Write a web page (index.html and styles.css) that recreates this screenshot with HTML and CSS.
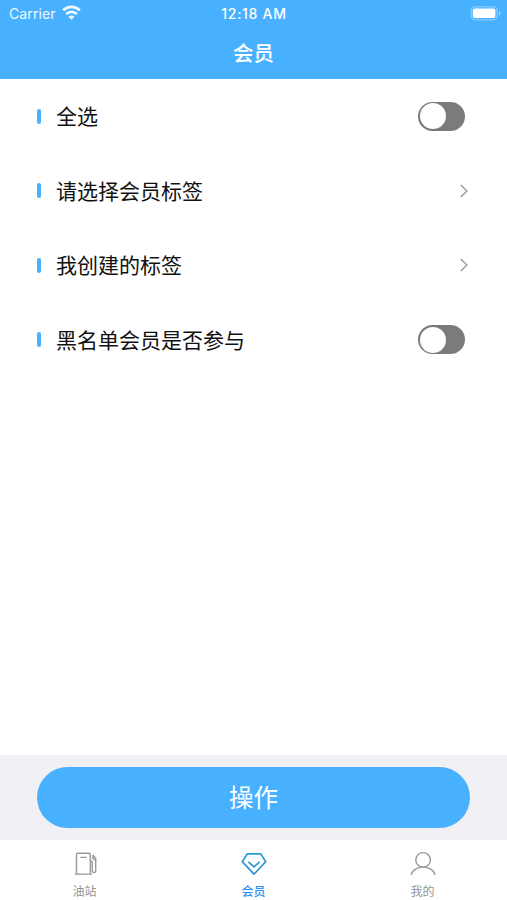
FILE: index.html
```html
<!DOCTYPE html>
<html lang="zh-CN">
<head>
<meta charset="utf-8">
<title>会员</title>
<link rel="stylesheet" href="styles.css">
</head>
<body>
<div class="screen">
  <header class="header">
    <div class="status">
      <div class="carrier">
        <span>Carrier</span>
        <svg class="wifi" width="19" height="15" viewBox="0 0 19 15" fill="none" stroke="#fff" stroke-width="2.8">
          <path d="M1.2 5.3a11.8 11.8 0 0 1 16.6 0"/>
          <path d="M4.2 9a7.6 7.6 0 0 1 10.6 0"/>
          <path d="M9.5 14.8 6.4 11.7a4.4 4.4 0 0 1 6.2 0z" fill="#fff" stroke="none"/>
        </svg>
      </div>
      <div class="time">12:18 AM</div>
      <svg class="battery" width="32" height="15" viewBox="0 0 32 15">
        <rect x="1.2" y=".8" width="26" height="13" rx="4" fill="none" stroke="#fff" stroke-opacity=".35" stroke-width="1.3"/>
        <rect x="2.8" y="2.5" width="22.6" height="9.6" rx="2.2" fill="#fff"/>
        <path d="M29 5.2c2.2.7 2.2 3.5 0 4.2z" fill="#fff" fill-opacity=".45"/>
      </svg>
    </div>
    <h1 class="title">会员</h1>
  </header>
  <main class="list">
    <div class="row"><span class="mark"></span><span class="label">全选</span><span class="switch"></span></div>
    <div class="row"><span class="mark"></span><span class="label">请选择会员标签</span>
      <svg class="chevron" width="8" height="14" viewBox="0 0 8 14"><path d="M.8 1 7 7 .8 13"/></svg></div>
    <div class="row"><span class="mark"></span><span class="label">我创建的标签</span>
      <svg class="chevron" width="8" height="14" viewBox="0 0 8 14"><path d="M.8 1 7 7 .8 13"/></svg></div>
    <div class="row"><span class="mark"></span><span class="label">黑名单会员是否参与</span><span class="switch"></span></div>
  </main>
  <div class="actions"><button class="action">操作</button></div>
  <nav class="tabs">
    <div class="tab">
      <svg width="28" height="28" viewBox="0 0 28 28">
        <path d="M5.5 24V4.4q0-1.2 1.2-1.2h11.4q1.2 0 1.2 1.2V24M4 24.1h17M9.4 7.4h6.2"/>
        <path d="M19.3 11.2h.9q1.1 0 1.1 1.1v8.6q0 1.6 1.7 1.6t1.7-1.6V8.2L21.6 5M22 5.5v3.4l2.7 1.5"/>
      </svg>
      <span>油站</span>
    </div>
    <div class="tab active">
      <svg width="28" height="28" viewBox="0 0 28 28">
        <path d="M7.4 3.8h13.2l5.2 7.9L14 24.2 2.2 11.7z"/>
        <path d="m8.4 11.8 5.6 5.1 5.6-5.1"/>
      </svg>
      <span>会员</span>
    </div>
    <div class="tab">
      <svg width="28" height="28" viewBox="0 0 28 28">
        <circle cx="14.1" cy="9.9" r="7.3"/>
        <path d="M2.3 24.8C4 14.6 24.2 14.6 25.9 24.8"/>
      </svg>
      <span>我的</span>
    </div>
  </nav>
</div>
</body>
</html>
```
FILE: styles.css
```css
* { box-sizing: border-box; }
body {
  margin: 0;
  background: #fff;
  color: #111;
  font-family: "Noto Sans CJK SC", sans-serif;
}
.screen {
  display: flex;
  flex-direction: column;
  width: 507px;
  height: 900px;
}
.header {
  height: 79px;
  background: #48b1ff;
  color: #fff;
}
.status {
  display: grid;
  grid-template-columns: 1fr auto 1fr;
  align-items: center;
  height: 27px;
  padding: 0 5px 0 9px;
  font: 14px/27px Inter, sans-serif;
}
.carrier {
  display: flex;
  align-items: center;
  gap: 6px;
  opacity: .92;
  letter-spacing: .1px;
}
.wifi { margin-top: -2px; }
.time {
  margin-left: -3px;
  font-weight: 500;
  letter-spacing: .7px;
}
.battery { justify-self: end; }
.title {
  margin: 0;
  font-size: 20.5px;
  font-weight: 500;
  line-height: 51px;
  text-align: center;
}
.list { flex: 1; }
.row {
  display: flex;
  align-items: center;
  height: 74.5px;
  padding: 0 42px 0 37px;
}
.mark {
  width: 4px;
  height: 15px;
  margin-right: 15px;
  border-radius: 2px;
  background: #48b1ff;
}
.label {
  flex: 1;
  padding-bottom: 2px;
  font-size: 21px;
  line-height: 30px;
}
.switch {
  width: 47px;
  height: 29px;
  padding: 1.5px;
  border-radius: 15px;
  background: #7b7b7b;
}
.switch::before {
  content: "";
  display: block;
  width: 26px;
  height: 26px;
  border-radius: 50%;
  background: #fff;
}
.chevron {
  margin-right: -3px;
  fill: none;
  stroke: #999;
  stroke-width: 1.3;
}
.actions {
  height: 85px;
  padding: 12px 37px;
  background: #f0f0f5;
}
.action {
  display: block;
  width: 100%;
  height: 61px;
  padding: 0 0 2px;
  border: 0;
  border-radius: 31px;
  background: #48b1ff;
  color: #fff;
  font: 24.5px/59px "Noto Sans CJK SC", sans-serif;
}
.tabs {
  display: grid;
  grid-template-columns: repeat(3, 1fr);
  height: 60px;
}
.tab {
  display: flex;
  flex-direction: column;
  align-items: center;
  padding-top: 10px;
  color: #929292;
  font-size: 12px;
  line-height: 18px;
}
.tab svg {
  margin-bottom: 4px;
  fill: none;
  stroke: #999;
  stroke-width: 1.4;
}
.tab.active {
  color: #2b90f5;
  font-weight: 500;
}
.tab.active svg {
  stroke: #2f98d3;
  stroke-width: 1.7;
  stroke-linejoin: round;
}
```
